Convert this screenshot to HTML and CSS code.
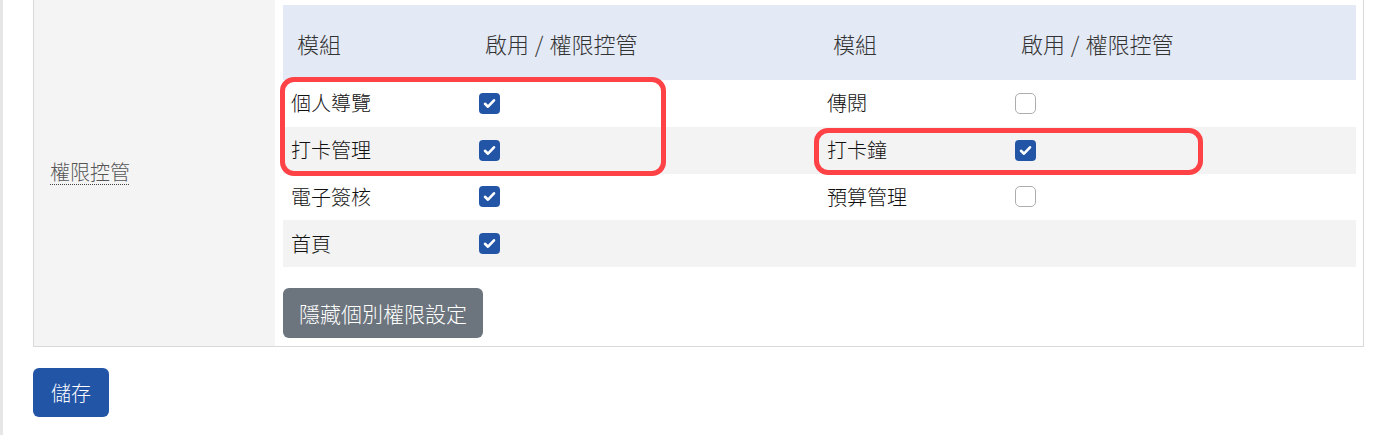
FILE: index.html
```html
<!DOCTYPE html>
<html lang="zh-Hant">
<head>
<meta charset="utf-8">
<title>權限控管</title>
<link rel="stylesheet" href="styles.css">
</head>
<body>
<div class="page">
  <div class="form-row">
    <div class="label-cell"><abbr class="label" title="權限控管">權限控管</abbr></div>
    <div class="value-cell">
      <div class="perm-table">
        <div class="row head">
          <div class="cell">模組</div>
          <div class="cell">啟用 / 權限控管</div>
          <div class="cell">模組</div>
          <div class="cell">啟用 / 權限控管</div>
        </div>
        <div class="row">
          <div class="cell name">個人導覽</div>
          <div class="cell"><span class="cb on"><svg viewBox="0 0 21 21"><path d="M6 10.8l3 2.9 6-6.4"/></svg></span></div>
          <div class="cell name">傳閱</div>
          <div class="cell"><span class="cb"></span></div>
        </div>
        <div class="row alt">
          <div class="cell name">打卡管理</div>
          <div class="cell"><span class="cb on"><svg viewBox="0 0 21 21"><path d="M6 10.8l3 2.9 6-6.4"/></svg></span></div>
          <div class="cell name">打卡鐘</div>
          <div class="cell"><span class="cb on"><svg viewBox="0 0 21 21"><path d="M6 10.8l3 2.9 6-6.4"/></svg></span></div>
        </div>
        <div class="row">
          <div class="cell name">電子簽核</div>
          <div class="cell"><span class="cb on"><svg viewBox="0 0 21 21"><path d="M6 10.8l3 2.9 6-6.4"/></svg></span></div>
          <div class="cell name">預算管理</div>
          <div class="cell"><span class="cb"></span></div>
        </div>
        <div class="row alt">
          <div class="cell name">首頁</div>
          <div class="cell"><span class="cb on"><svg viewBox="0 0 21 21"><path d="M6 10.8l3 2.9 6-6.4"/></svg></span></div>
          <div class="cell name"></div>
          <div class="cell"></div>
        </div>
        <div class="highlight hl-one"></div>
        <div class="highlight hl-two"></div>
      </div>
      <button class="btn btn-secondary" type="button">隱藏個別權限設定</button>
    </div>
  </div>
  <button class="btn btn-primary" type="button">儲存</button>
</div>
</body>
</html>
```

FILE: styles.css
```css
html, body {
  margin: 0;
  padding: 0;
  background: #ffffff;
}

body {
  font-family: "Noto Sans CJK TC", "Noto Sans", sans-serif;
  font-weight: 300;
  color: #111111;
}

.page {
  border-left: 3px solid #e6e6e6;
  padding-left: 30px;
  padding-bottom: 18px;
  margin-top: -4px;
}

.form-row {
  display: grid;
  grid-template-columns: 241px 1fr;
  width: 1331px;
  box-sizing: border-box;
  border: 1px solid #d9d9d9;
}

.label-cell {
  background: #f4f4f4;
  display: flex;
  align-items: center;
  padding-left: 16px;
}

.label {
  font-size: 20px;
  line-height: 24px;
  color: #555555;
  text-decoration: underline dotted #444444 1px;
  text-underline-offset: 4px;
}

.value-cell {
  padding: 8px 7px 8px 8px;
  display: flex;
  flex-direction: column;
  align-items: flex-start;
}

.perm-table {
  position: relative;
  width: 1073px;
}

.row {
  display: grid;
  grid-template-columns: 188px 348px 188px 349px;
  height: 46.75px;
  align-items: center;
}

.row.alt {
  background: #f3f3f3;
}

.row.head {
  height: 75px;
  background: #e3e9f5;
}

.cell {
  padding-left: 8px;
  font-size: 20px;
  line-height: 24px;
  display: flex;
  align-items: center;
}

.row.head .cell {
  padding-left: 14px;
  font-size: 22px;
  color: #333333;
  word-spacing: 1px;
}

.cb {
  width: 21px;
  height: 21px;
  box-sizing: border-box;
  border: 1px solid #adadad;
  border-radius: 5px;
  background: #ffffff;
  display: block;
}

.cb.on {
  border: none;
  border-radius: 4px;
  background: #2355a7;
}

.cb svg {
  display: block;
  width: 21px;
  height: 21px;
}

.cb svg path {
  fill: none;
  stroke: #ffffff;
  stroke-width: 2.6;
  stroke-linecap: round;
  stroke-linejoin: round;
}

.highlight {
  position: absolute;
  box-sizing: border-box;
  border: 5px solid #ff4246;
  border-radius: 14px;
  pointer-events: none;
}

.hl-one {
  left: -3px;
  top: 72px;
  width: 386px;
  height: 99px;
}

.hl-two {
  left: 531px;
  top: 123px;
  width: 389px;
  height: 47px;
}

.btn {
  border: none;
  color: #ffffff;
  font-family: "Noto Sans CJK TC", "Noto Sans", sans-serif;
  font-weight: 300;
  line-height: 24px;
  border-radius: 6px;
  cursor: pointer;
}

.btn-secondary {
  margin-top: 21px;
  height: 50px;
  padding: 0 16px;
  font-size: 21px;
  background: #6c757d;
}

.btn-primary {
  margin-top: 21px;
  height: 49px;
  padding: 0 18px;
  font-size: 20px;
  background: #2355a7;
}
```
